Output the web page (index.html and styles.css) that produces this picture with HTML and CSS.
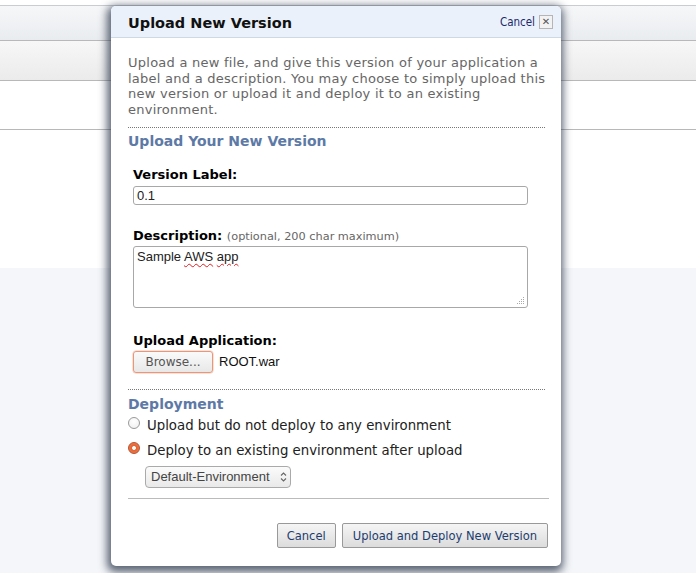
FILE: index.html
```html
<!DOCTYPE html>
<html>
<head>
<meta charset="utf-8">
<link rel="stylesheet" href="styles.css">
</head>
<body>
<div class="page">
  <div class="gap-top"></div>
  <div class="band band-a"></div>
  <div class="band band-b"></div>
  <div class="band band-c"></div>
  <div class="band band-d"></div>
  <div class="band band-e"></div>
</div>

<div class="dialog">
  <div class="dlg-head">
    <div class="dlg-title">Upload New Version</div>
    <div class="dlg-close"><span class="close-link">Cancel</span><span class="close-x">&#x2715;</span></div>
  </div>
  <div class="dlg-body">
    <p class="intro">Upload a new file, and give this version of your application a label and a description. You may choose to simply upload this new version or upload it and deploy it to an existing environment.</p>
    <div class="dotted"></div>
    <h2 class="sec">Upload Your New Version</h2>
    <div class="fields">
      <div class="field f-label">
        <div class="lbl">Version Label:</div>
        <div class="input">0.1</div>
      </div>
      <div class="field f-desc">
        <div class="lbl">Description: <span class="hint">(optional, 200 char maximum)</span></div>
        <div class="textarea"><span>Sample <span class="spell">AWS</span> <span class="spell">app</span></span>
          <svg class="grip" width="8" height="8" viewBox="0 0 8 8"><g fill="#aaa"><rect x="6" y="0" width="1" height="1"/><rect x="4" y="2" width="1" height="1"/><rect x="6" y="2" width="1" height="1"/><rect x="2" y="4" width="1" height="1"/><rect x="4" y="4" width="1" height="1"/><rect x="6" y="4" width="1" height="1"/><rect x="0" y="6" width="1" height="1"/><rect x="2" y="6" width="1" height="1"/><rect x="4" y="6" width="1" height="1"/><rect x="6" y="6" width="1" height="1"/></g></svg>
        </div>
      </div>
      <div class="field f-file">
        <div class="lbl">Upload Application:</div>
        <div class="file-row"><span class="browse">Browse...</span><span class="fname">ROOT.war</span></div>
      </div>
    </div>
    <div class="dotted dotted2"></div>
    <h2 class="sec sec2">Deployment</h2>
    <div class="radio-row r1"><span class="radio"></span>Upload but do not deploy to any environment</div>
    <div class="radio-row r2"><span class="radio on"></span>Deploy to an existing environment after upload</div>
    <div class="select">Default-Environment
      <svg class="arrows" width="7" height="12" viewBox="0 0 7 12"><path d="M1 4.5 L3.5 2 L6 4.5" fill="none" stroke="#666" stroke-width="1.1"/><path d="M1 7.5 L3.5 10 L6 7.5" fill="none" stroke="#666" stroke-width="1.1"/></svg>
    </div>
    <div class="solid"></div>
    <div class="actions">
      <span class="btn btn-cancel">Cancel</span>
      <span class="btn">Upload and Deploy New Version</span>
    </div>
  </div>
</div>
</body>
</html>
```
FILE: styles.css
```css
html, body { margin: 0; padding: 0; }
body { width: 696px; height: 573px; overflow: hidden; background: #f4f6f9; font-family: "DejaVu Sans", Verdana, sans-serif; }

.page { display: flex; flex-direction: column; }
.gap-top { height: 5px; background: #fff; }
.band { border-top: 1px solid #c9ccd0; }
.band-a { height: 34px; background: linear-gradient(#f6f7f9, #e9ecef); }
.band-b { height: 39px; background: linear-gradient(#f7f7f7, #ebebeb); border-top-color: #b8b8b8; }
.band-c { height: 48px; background: #fff; border-top-color: #b8b8b8; }
.band-d { height: 138px; background: #fff; border-top-color: #b8b8b8; }
.band-e { height: 300px; background: #f4f6f9; border-top: none; }

.dialog {
  position: absolute; left: 111px; top: 6px; width: 450px; height: 560px;
  background: #fff; border-radius: 5px;
  box-shadow: -1px 3px 8px 3px rgba(40, 52, 72, 0.75);
  overflow: hidden;
}
.dlg-head {
  height: 31px; background: #eaf1fb; border-bottom: 1px solid #cfd9e6;
  display: flex; align-items: center; justify-content: space-between;
  padding: 0 8px 0 17px;
}
.dlg-title { font-weight: bold; font-size: 14.5px; color: #111; margin-top: 3px; }
.dlg-close { display: flex; align-items: center; gap: 4px; margin-top: 1px; }
.close-link { font-family: "DejaVu Sans Condensed", Tahoma, sans-serif; font-size: 11.5px; color: #1c2a6b; }
.close-x {
  width: 12px; height: 12px; border: 1px solid #b5b5b5; background: #f2f2f2;
  font-size: 10px; line-height: 12px; text-align: center; color: #555; font-weight: bold;
}

.dlg-body { padding: 0 16px 0 17px; }
.intro { margin: 17px 0 0; width: 426px; font-size: 13px; letter-spacing: 0.25px; line-height: 15.7px; color: #666; }
.dotted { border-top: 1px dotted #777; margin-top: 9px; }
.sec { margin: 5px 0 0; font-size: 14px; font-weight: bold; color: #5d7aa6; }
.sec2 { margin-top: 6px; }

.fields { padding-left: 5px; }
.field { margin-top: 17px; }
.f-label { margin-top: 18px; }
.f-desc { margin-top: 23px; }
.f-file { margin-top: 25px; }
.lbl { font-size: 13px; font-weight: bold; color: #000; }
.hint { font-weight: normal; font-size: 11.3px; color: #666; }
.input, .textarea {
  width: 387px; border: 1px solid #a8a8a8; border-radius: 3px;
  font-family: "Liberation Sans", Arial, sans-serif; font-size: 13px; color: #222;
  padding: 0 3px; margin-top: 4px;
}
.input { height: 17px; line-height: 17px; }
.textarea { height: 59px; line-height: 17px; position: relative; padding-top: 1px; margin-top: 3px; }
.spell { text-decoration: underline wavy #e02020; text-decoration-thickness: 1px; text-underline-offset: 2px; }
.grip { position: absolute; right: 2px; bottom: 2px; }
.file-row { display: flex; align-items: center; gap: 6px; margin-top: 3px; }
.browse {
  width: 78px; height: 20px; border: 1px solid #e9967a; border-radius: 3px;
  background: linear-gradient(#fafafa, #e8e8e8); box-shadow: 0 0 0 0.5px #f3c4b0;
  font-size: 12px; color: #555; text-align: center; line-height: 20px;
}
.fname { font-family: "Liberation Sans", Arial, sans-serif; font-size: 13px; color: #111; }
.dotted2 { margin-top: 16px; }

.radio-row { display: flex; align-items: center; font-size: 13.3px; color: #222; height: 19px; }
.r1 { margin-top: 4px; }
.r2 { margin-top: 6px; }
.radio {
  width: 10px; height: 10px; border-radius: 50%; border: 1px solid #999;
  background: radial-gradient(circle at 50% 35%, #fff, #eee); margin-right: 7px; margin-top: -4px;
}
.radio.on {
  border-color: #b5502e;
  background: radial-gradient(circle, #fff 0 1.5px, #e4622f 2.3px, #ee8a62 100%);
}
.select {
  margin: 6px 0 0 17px; width: 137px; height: 20px; border: 1px solid #aaa; border-radius: 4px;
  background: linear-gradient(#fbfbfb, #e9e9e9);
  font-family: "Liberation Sans", Arial, sans-serif; font-size: 13px; color: #444;
  line-height: 20px; padding-left: 5px; display: flex; align-items: center; justify-content: space-between; padding-right: 2px;
}
.arrows { margin-right: 1px; }
.solid { border-top: 1px solid #bbb; margin: 10px -4px 0 0; }
.actions { display: flex; justify-content: flex-end; gap: 6px; margin: 24px -3px 0 0; }
.btn {
  height: 23px; line-height: 23px; padding: 0 10px; border: 1px solid #999; border-radius: 2px;
  background: linear-gradient(#f5f5f5, #dcdcdc);
  font-family: "DejaVu Sans Condensed", Tahoma, sans-serif; font-size: 12.8px; color: #1e3d70;
}
.btn-cancel { padding: 0 9px; }
```
